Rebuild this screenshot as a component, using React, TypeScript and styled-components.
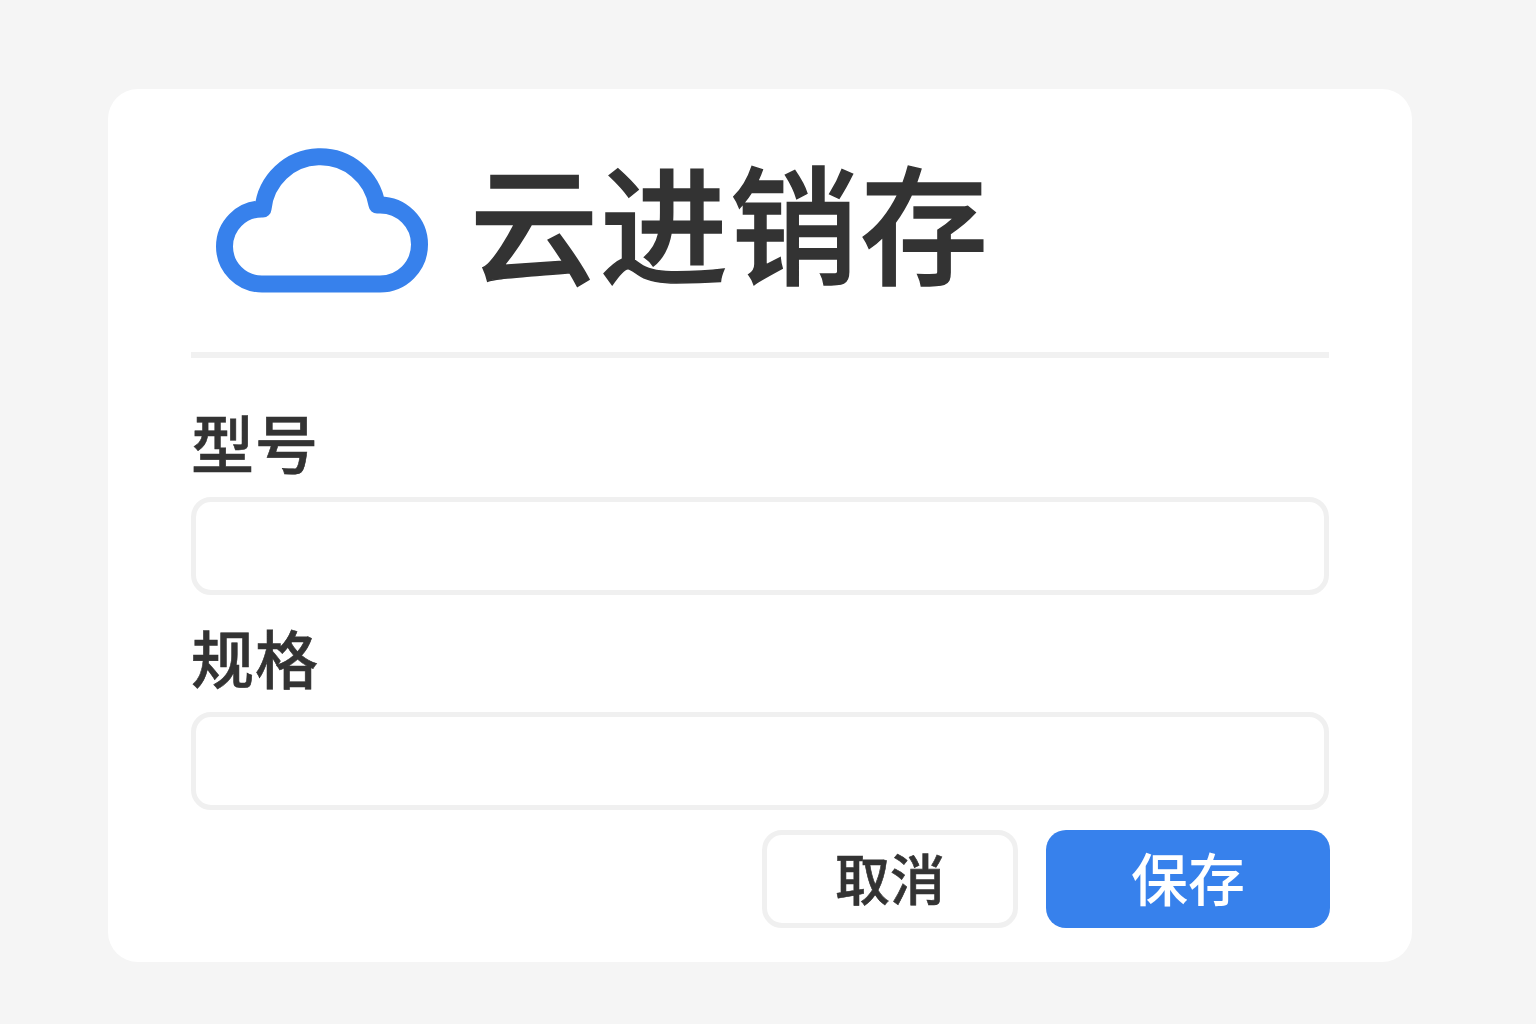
import React from "react";
import styled, { createGlobalStyle } from "styled-components";

const GlobalStyle = createGlobalStyle`
  html, body {
    margin: 0;
    padding: 0;
    background: #f5f5f5;
  }
  * {
    box-sizing: border-box;
  }
`;

const Page = styled.div`
  width: 1536px;
  height: 1024px;
  padding: 89px 124px 62px 108px;
  font-family: "Noto Sans CJK SC", "Noto Sans", sans-serif;
  color: #333333;
`;

const Card = styled.div`
  width: 1304px;
  height: 873px;
  padding: 59px 83px 34px 83px;
  background: #ffffff;
  border-radius: 30px;
  display: flex;
  flex-direction: column;
`;

const Header = styled.div`
  height: 210px;
  padding: 0 0 0 25px;
  display: flex;
  align-items: flex-start;
  gap: 42px;
  border-bottom: 6px solid #f1f1f1;
`;

const Logo = styled.svg`
  width: 212px;
  height: 145px;
  flex: none;
`;

const Title = styled.h1`
  margin: -6px 0 0;
  font-size: 128px;
  line-height: 156px;
  font-weight: 500;
  letter-spacing: 2px;
  -webkit-text-stroke: 1.5px #333333;
`;

const Field = styled.div`
  display: flex;
  flex-direction: column;
`;

const Label = styled.label`
  height: 93px;
  font-size: 63px;
  line-height: 74px;
  font-weight: 500;
  letter-spacing: 1px;
  -webkit-text-stroke: 0.6px #333333;
`;

const Input = styled.div`
  height: 98px;
  border: 5px solid #f0f0f0;
  border-radius: 20px;
  background: #ffffff;
`;

const Form = styled.div`
  margin-top: 46px;
  display: flex;
  flex-direction: column;
  gap: 24px;
`;

const Actions = styled.div`
  margin: 20px -1px 0 0;
  display: flex;
  justify-content: flex-end;
  gap: 28px;
`;

const Button = styled.button<{ $primary?: boolean; $width: number }>`
  width: ${(p) => p.$width}px;
  height: 98px;
  padding: 0 0 6px;
  border-radius: 20px;
  font-family: inherit;
  font-size: ${(p) => (p.$primary ? 57 : 55)}px;
  line-height: 1;
  font-weight: 500;
  color: ${(p) => (p.$primary ? "#ffffff" : "#333333")};
  background: ${(p) => (p.$primary ? "#3781ec" : "#ffffff")};
  border: ${(p) => (p.$primary ? "none" : "5px solid #f0f0f0")};
  -webkit-text-stroke: ${(p) => (p.$primary ? "0" : "0.6px #333333")};
`;

export default function App() {
  return (
    <>
      <GlobalStyle />
      <Page>
        <Card>
          <Header>
            <Logo viewBox="0 0 212 145" fill="none">
              <path
                d="M46 136H164A39.5 39.5 0 0 0 164 57H161A57.5 57.5 0 0 0 47 61H46A37.5 37.5 0 0 0 46 136Z"
                stroke="#3781ec"
                strokeWidth="17"
                strokeLinejoin="round"
              />
            </Logo>
            <Title>云进销存</Title>
          </Header>
          <Form>
            <Field>
              <Label>型号</Label>
              <Input />
            </Field>
            <Field>
              <Label>规格</Label>
              <Input />
            </Field>
          </Form>
          <Actions>
            <Button $width={256}>取消</Button>
            <Button $primary $width={284}>保存</Button>
          </Actions>
        </Card>
      </Page>
    </>
  );
}
